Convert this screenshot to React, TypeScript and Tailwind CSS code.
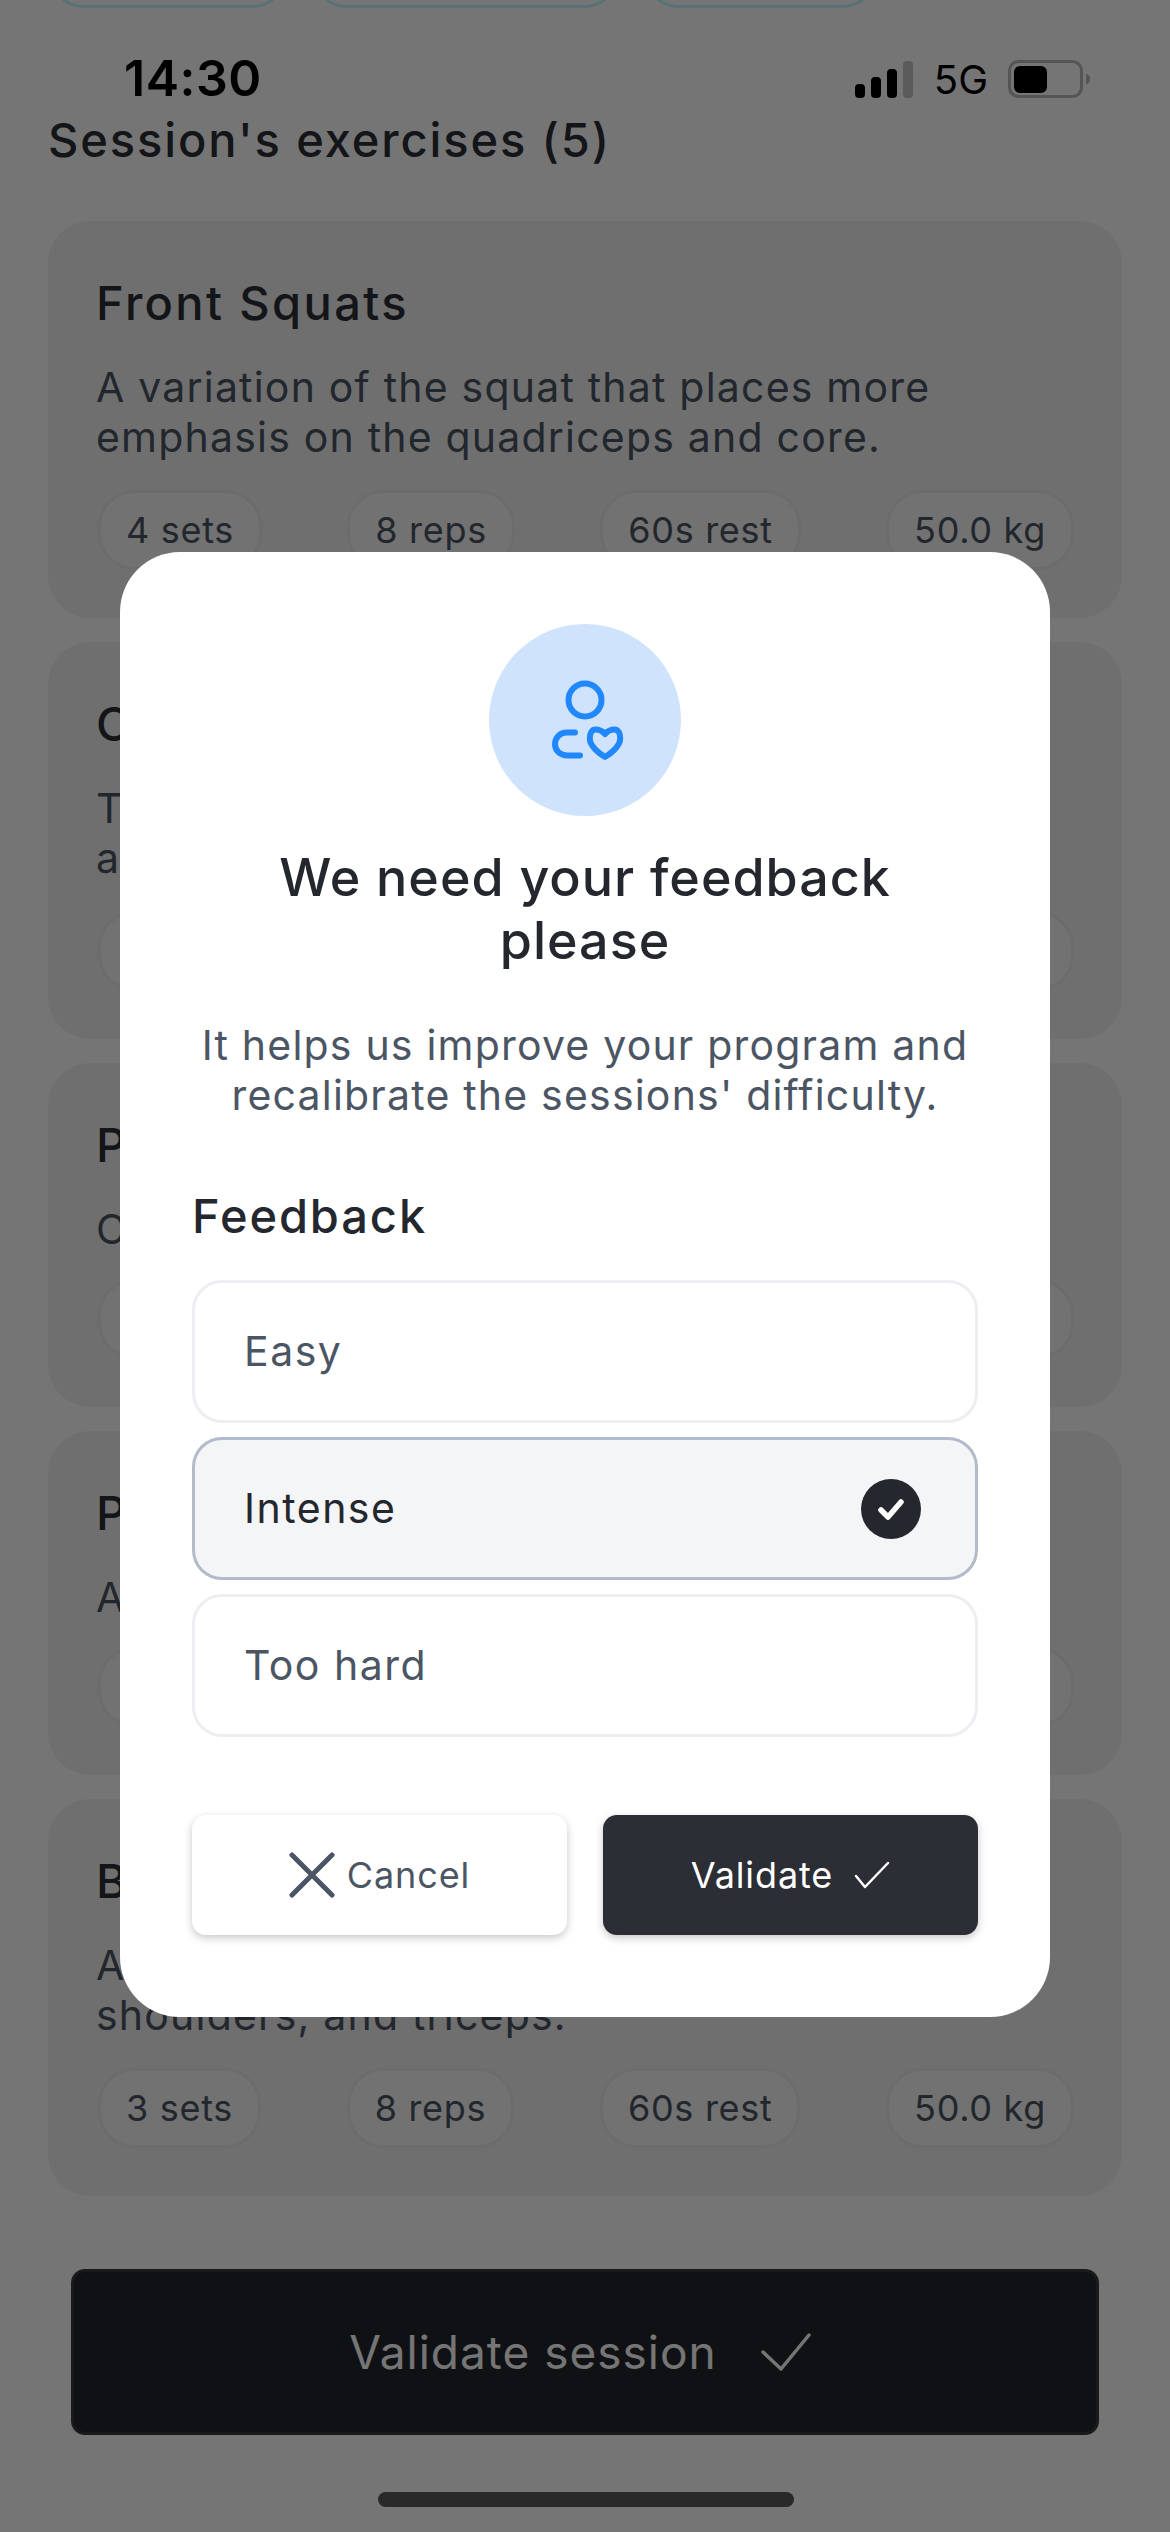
const FONT = "font-['Inter','Noto_Sans',sans-serif]";

const exercises = [
  { name: 'Front Squats', desc: ['A variation of the squat that places more', 'emphasis on the quadriceps and core.'], sets: '4 sets' },
  { name: 'Overhead Press', desc: ['The main shoulder press movement for the', 'arms, delts and upper chest as a whole.'], sets: '4 sets' },
  { name: 'Pull Ups', desc: ['Classic bodyweight move for the upper back.'], sets: '4 sets' },
  { name: 'Push Ups', desc: ['A bodyweight exercise for the chest and arms.'], sets: '4 sets' },
  { name: 'Bench Press', desc: ['A compound lift that targets the chest,', 'shoulders, and triceps.'], sets: '3 sets' },
];

function Pill({ label }: { label: string }) {
  return (
    <div className="flex h-[80px] items-center rounded-[36px] border-[3px] border-[#ebebeb] bg-[#f8f8f8] px-[25px] text-[36px] tracking-[0.7px] text-[#4b5563]">
      {label}
    </div>
  );
}

function ExerciseCard({ name, desc, sets }: { name: string; desc: string[]; sets: string }) {
  return (
    <div className="rounded-[42px] bg-[#f1f1f2] px-[48px] pb-[48px] pt-[53px]">
      <div className="h-[58px] text-[47px] font-medium leading-[58px] tracking-[2.4px] text-[#2b2f36]">{name}</div>
      <div
        className={
          desc.length === 1
            ? 'mb-[25px] mt-[30px] whitespace-nowrap text-[41px] leading-[50px] tracking-[1.2px] text-[#4b5563]'
            : 'mb-[28px] mt-[30px] whitespace-nowrap text-[41px] leading-[50px] tracking-[1.2px] text-[#4b5563]'
        }
      >
        {desc.map((line) => (
          <div key={line}>{line}</div>
        ))}
      </div>
      <div className="flex justify-between pl-[2px]">
        <Pill label={sets} />
        <Pill label="8 reps" />
        <Pill label="60s rest" />
        <Pill label="50.0 kg" />
      </div>
    </div>
  );
}

function FeedbackOption({ label, selected }: { label: string; selected?: boolean }) {
  return (
    <div
      className={
        selected
          ? 'flex h-[143px] items-center justify-between rounded-[30px] border-[3px] border-[#b2bbc9] bg-[#f4f5f7] pl-[49px] pr-[54px] text-[41px] tracking-[1.5px] text-[#24272d]'
          : 'flex h-[143px] items-center justify-between rounded-[30px] border-[3px] border-[#eceef2] bg-white pl-[49px] pr-[54px] text-[41px] tracking-[1.5px] text-[#4b5563]'
      }
    >
      <span>{label}</span>
      {selected && (
        <span className="flex h-[60px] w-[60px] items-center justify-center rounded-full bg-[#24272d]">
          <svg width="30" height="30" viewBox="0 0 30 30" fill="none" stroke="white" strokeWidth="5.5" strokeLinecap="round" strokeLinejoin="round">
            <path d="M5 16l7 7L25 8" />
          </svg>
        </span>
      )}
    </div>
  );
}

function FeedbackIcon() {
  return (
    <svg width="90" height="90" viewBox="0 5 90 90" fill="none" stroke="#2188fb" strokeWidth="6" strokeLinecap="round" strokeLinejoin="round">
      <circle cx="45" cy="30" r="16.500" />
      <path d="M35 62.500H27C20 62.500 15 67.500 15 74C15 80.500 20 85.500 27 85.500H40" />
      <path d="M65 64C62 60.500 58 59.500 55.500 59.500C51.500 59.500 49.800 64 49.800 68.500C49.800 76.500 60 84 65 87C70 84 80.200 76.500 80.200 68.500C80.200 64 78.500 59.500 74.500 59.500C72 59.500 68 60.500 65 64Z" />
    </svg>
  );
}

function StatusBar() {
  return (
    <div className="absolute left-0 top-[50px] flex h-[56px] w-full items-center justify-between pl-[124px] pr-[79px] text-black">
      <span className="text-[50px] font-semibold leading-[56px] tracking-[0.5px]">14:30</span>
      <div className="flex items-center">
        <svg width="58" height="37" viewBox="0 0 58 37" className="mt-[2px]">
          <rect x="0" y="23" width="10" height="14" rx="4" fill="black" />
          <rect x="16" y="16" width="10" height="21" rx="4" fill="black" />
          <rect x="32" y="8" width="10" height="29" rx="4" fill="black" />
          <rect x="48" y="0" width="10" height="37" rx="4" fill="#5a5a5a" />
        </svg>
        <span className="ml-[21px] mt-[3px] text-[40px] leading-[48px]">5G</span>
        <svg width="83" height="38" viewBox="0 0 83 38" className="ml-[20px] mt-[2px]">
          <rect x="1.500" y="1.500" width="72" height="35" rx="9" fill="none" stroke="#555555" strokeWidth="3" />
          <rect x="6" y="6" width="33" height="27" rx="6" fill="black" />
          <path d="M78 14c3 0 4 2.500 4 5s-1 5-4 5z" fill="#555555" />
        </svg>
      </div>
    </div>
  );
}

export default function App() {
  return (
    <div className={`relative h-[2532px] w-[1170px] overflow-hidden bg-white ${FONT}`}>
      <div className="flex h-full flex-col px-[48px]">
        <div className="-mt-[72px] flex gap-[23px]">
          <div className="h-[80px] w-[240px] rounded-[36px] border-[3px] border-[#bdf8ff] bg-white" />
          <div className="h-[80px] w-[309px] rounded-[36px] border-[3px] border-[#bdf8ff] bg-white" />
          <div className="h-[80px] w-[235px] rounded-[36px] border-[3px] border-[#bdf8ff] bg-white" />
        </div>
        <h2 className="mt-[104px] h-[56px] text-[47px] font-medium leading-[56px] tracking-[1.9px] text-[#2b2f36]">
          Session's exercises (5)
        </h2>
        <div className="mt-[53px] flex flex-col gap-[24px]">
          {exercises.map((ex) => (
            <ExerciseCard key={ex.name} {...ex} />
          ))}
        </div>
        <button className="mx-[23px] mt-[73px] flex h-[166px] items-center justify-center gap-[44px] rounded-[14px] border-[3px] border-[#3a3a40] bg-[#24272d] pr-[10px] text-[46px] tracking-[1px] text-white">
          Validate session
          <svg width="50" height="38" viewBox="0 0 50 38" fill="none" stroke="white" strokeWidth="3.500" strokeLinecap="round" strokeLinejoin="round">
            <path d="M2 19L20 36L48 2" />
          </svg>
        </button>
      </div>

      <div className="absolute inset-0 flex justify-center bg-black/[0.54] pt-[552px]">
        <div className="h-[1465px] w-[930px] rounded-[60px] bg-white px-[72px] pt-[72px]">
          <div className="mx-auto flex h-[192px] w-[192px] items-center justify-center rounded-full bg-[#cfe3fc]">
            <FeedbackIcon />
          </div>
          <h1 className="mt-[30px] text-center text-[52px] font-medium leading-[63px] tracking-[1px] text-[#24272d]">
            We need your feedback
            <br />
            please
          </h1>
          <p className="mt-[48px] text-center text-[41px] leading-[50px] tracking-[1.2px] text-[#4b5563]">
            It helps us improve your program and
            <br />
            recalibrate the sessions' difficulty.
          </p>
          <h3 className="mt-[68px] text-[47px] font-medium leading-[56px] tracking-[1.9px] text-[#24272d]">Feedback</h3>
          <div className="mt-[36px] flex flex-col gap-[14px]">
            <FeedbackOption label="Easy" />
            <FeedbackOption label="Intense" selected />
            <FeedbackOption label="Too hard" />
          </div>
          <div className="mt-[78px] flex gap-[36px]">
            <button className="flex h-[120px] w-[375px] items-center justify-center gap-[12px] rounded-[14px] bg-white text-[36px] tracking-[0.9px] text-[#4b5563] shadow-[0_3px_9px_rgba(0,0,0,0.22)]">
              <svg width="46" height="46" viewBox="0 0 46 46" fill="none" stroke="#4b5563" strokeWidth="5" strokeLinecap="round">
                <path d="M3 3l40 40M43 3L3 43" />
              </svg>
              Cancel
            </button>
            <button className="flex h-[120px] w-[375px] items-center justify-center gap-[21px] rounded-[14px] bg-[#2b2e34] text-[36px] tracking-[0.9px] text-white shadow-[0_3px_9px_rgba(0,0,0,0.22)]">
              Validate
              <svg width="36" height="28" viewBox="0 0 36 28" fill="none" stroke="white" strokeWidth="2.500" strokeLinecap="round" strokeLinejoin="round">
                <path d="M2 15l9 11L34 2" />
              </svg>
            </button>
          </div>
        </div>
      </div>

      <StatusBar />
      <div className="absolute bottom-[25px] left-[378px] h-[15px] w-[416px] rounded-full bg-[#292929]" />
    </div>
  );
}
